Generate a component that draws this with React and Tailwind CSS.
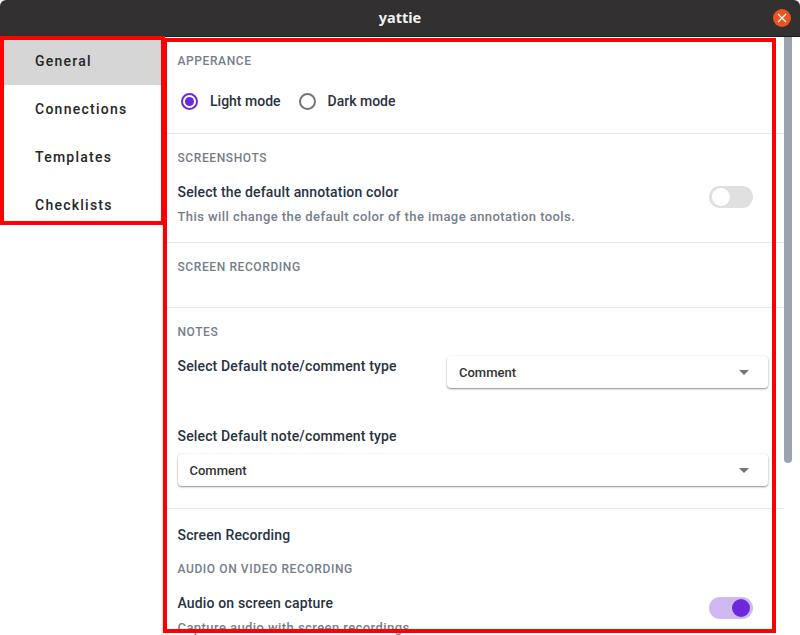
const navItems = ['General', 'Connections', 'Templates', 'Checklists']

function Heading({ children, className = '' }) {
  return <h3 className={`text-xs leading-4 font-medium tracking-[0.6px] text-[#767d8a] ${className}`}>{children}</h3>
}

function Label({ children, className = '' }) {
  return <div className={`text-sm leading-5 font-medium tracking-[0.15px] text-[#293241] ${className}`}>{children}</div>
}

function Hint({ children }) {
  return <div className="mt-[5px] text-[13px] leading-5 font-medium tracking-[0.43px] text-[#767d8a]">{children}</div>
}

function Toggle({ on }) {
  return (
    <div className={`flex h-[22px] w-11 shrink-0 items-center rounded-full p-[3px] ${on ? 'justify-end bg-[#d0b9f2]' : 'justify-start bg-[#e0e0e0]'}`}>
      <div className={`h-[18px] w-[18px] rounded-full ${on ? 'bg-[#6d28d9]' : 'bg-white'}`} />
    </div>
  )
}

function Radio({ on, label }) {
  return (
    <div className="flex items-center">
      <div className={`flex h-[17px] w-[17px] items-center justify-center rounded-full border-2 ${on ? 'border-[#6d28d9]' : 'border-[#757575]'}`}>
        {on && <div className="h-[9px] w-[9px] rounded-full bg-[#6d28d9]" />}
      </div>
      <span className="ml-3 text-sm leading-5 font-medium text-[#293241]">{label}</span>
    </div>
  )
}

function Select({ className = '' }) {
  return (
    <div className={`flex h-8 items-center justify-between rounded-[4px] bg-white pr-[19px] pl-3 shadow-[0_1px_2px_rgba(0,0,0,0.45),0_0_2px_rgba(0,0,0,0.05)] ${className}`}>
      <span className="pt-0.5 text-[13px] font-medium text-[#333]">Comment</span>
      <div className="h-0 w-0 border-x-[5px] border-t-[5px] border-x-transparent border-t-[#757575]" />
    </div>
  )
}

export default function App() {
  return (
    <div className="relative flex h-[635px] w-[800px] flex-col overflow-hidden bg-white font-['Roboto',sans-serif]">
      <header className="flex h-[37px] shrink-0 items-center justify-center rounded-t-[6px] border-b border-[#1c1b1b] bg-[#323030]">
        <span className="font-['Noto_Sans',sans-serif] text-[14.5px] font-bold text-[#f2f2f2]">yattie</span>
        <div className="absolute top-[9px] right-[9px] flex h-[18px] w-[18px] items-center justify-center rounded-full bg-[#e95420]">
          <svg width="10" height="10" viewBox="0 0 10 10" stroke="white" strokeWidth="1.2"><path d="M1 1 9 9M9 1 1 9" /></svg>
        </div>
      </header>

      <div className="flex min-h-0 flex-1">
        <nav className="w-[163px] shrink-0 border-r border-[#e0e0e0]">
          {navItems.map((item, i) => (
            <div key={item} className={`flex h-12 items-center pl-[35px] text-sm font-medium tracking-[1.25px] text-[#262626] ${i === 0 ? 'bg-[#d6d6d6]' : ''}`}>
              {item}
            </div>
          ))}
        </nav>

        <main className="w-[621px] shrink-0 overflow-hidden">
          <section className="h-[97px] border-b border-[#e5e7eb] pt-4 pr-3 pl-[14.5px]">
            <Heading>APPERANCE</Heading>
            <div className="mt-[22px] flex gap-[18px] pl-[3.5px]">
              <Radio on label="Light mode" />
              <Radio label="Dark mode" />
            </div>
          </section>

          <section className="h-[109px] border-b border-[#e5e7eb] pt-4 pr-3 pl-[14.5px]">
            <Heading>SCREENSHOTS</Heading>
            <div className="mt-[16px] flex items-start justify-between pr-[19px]">
              <div>
                <Label>Select the default annotation color</Label>
                <Hint>This will change the default color of the image annotation tools.</Hint>
              </div>
              <div className="mt-[4px]"><Toggle /></div>
            </div>
          </section>

          <section className="h-[65px] border-b border-[#e5e7eb] pt-4 pr-3 pl-[14.5px]">
            <Heading>SCREEN RECORDING</Heading>
          </section>

          <section className="h-[201px] border-b border-[#e5e7eb] pt-4 pr-3 pl-[14.5px]">
            <Heading>NOTES</Heading>
            <div className="mt-4 flex items-start">
              <Label className="w-[269.5px]">Select Default note/comment type</Label>
              <Select className="w-[321px]" />
            </div>
            <Label className="mt-[38px]">Select Default note/comment type</Label>
            <Select className="mt-2 w-[590.5px]" />
          </section>

          <section className="pt-4 pr-3 pl-[14.5px]">
            <Label>Screen Recording</Label>
            <Heading className="mt-4">AUDIO ON VIDEO RECORDING</Heading>
            <div className="mt-4 flex items-start justify-between pr-[19px]">
              <div>
                <Label>Audio on screen capture</Label>
                <Hint>Capture audio with screen recordings</Hint>
              </div>
              <div className="mt-[4px]"><Toggle on /></div>
            </div>
          </section>
        </main>
      </div>

      {/* scrollbar thumb */}
      <div className="absolute top-[37px] left-[784px] h-[426px] w-2 rounded-b-[4px] bg-[#9ca3af]" />

      {/* red highlight boxes drawn on the screenshot */}
      <div className="absolute top-[36px] left-0 h-[189px] w-[165px] border-4 border-[#ff0000]" />
      <div className="absolute top-[38px] left-[163px] h-[595px] w-[613px] border-4 border-[#ff0000]" />
    </div>
  )
}
